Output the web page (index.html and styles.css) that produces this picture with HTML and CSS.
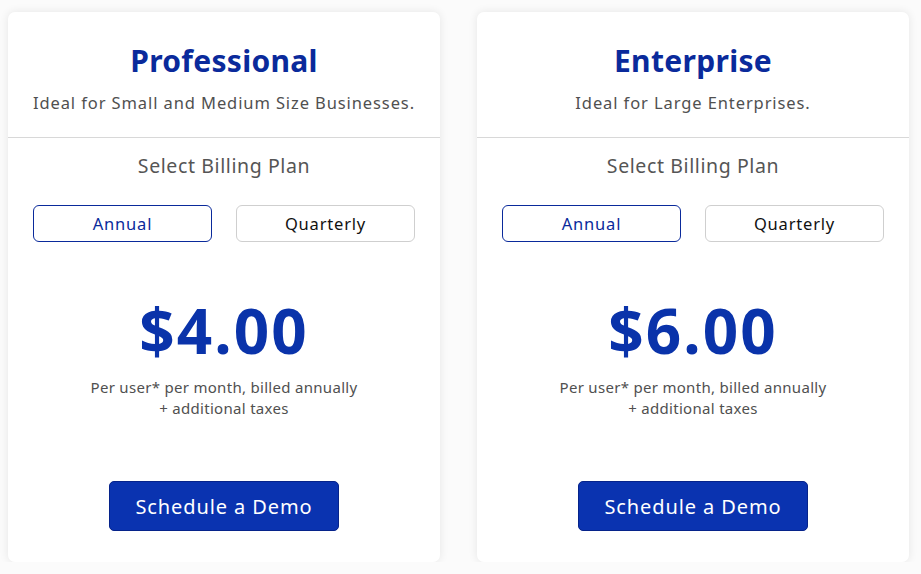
FILE: index.html
```html
<!DOCTYPE html>
<html>
<head>
<meta charset="utf-8">
<link rel="stylesheet" href="styles.css">
</head>
<body>
<div class="plans">
  <div class="card">
    <div class="card-head">
      <h2 class="title">Professional</h2>
      <p class="subtitle">Ideal for Small and Medium Size Businesses.</p>
    </div>
    <div class="card-body">
      <div class="billing-label">Select Billing Plan</div>
      <div class="toggle">
        <button class="opt active">Annual</button>
        <button class="opt">Quarterly</button>
      </div>
      <div class="price">$4.00</div>
      <p class="note">Per user* per month, billed annually<br>+ additional taxes</p>
      <button class="cta">Schedule a Demo</button>
    </div>
  </div>
  <div class="card">
    <div class="card-head">
      <h2 class="title">Enterprise</h2>
      <p class="subtitle">Ideal for Large Enterprises.</p>
    </div>
    <div class="card-body">
      <div class="billing-label">Select Billing Plan</div>
      <div class="toggle">
        <button class="opt active">Annual</button>
        <button class="opt">Quarterly</button>
      </div>
      <div class="price">$6.00</div>
      <p class="note">Per user* per month, billed annually<br>+ additional taxes</p>
      <button class="cta">Schedule a Demo</button>
    </div>
  </div>
</div>
</body>
</html>
```

FILE: styles.css
```css
* { box-sizing: border-box; }
html, body { margin: 0; padding: 0; }
body {
  background: #fbfbfb;
  font-family: "Noto Sans", "Open Sans", sans-serif;
  color: #555;
}
.plans {
  display: flex;
  gap: 37px;
  padding: 12px 0 0 8px;
}
.card {
  width: 432px;
  height: 550px;
  background: #fff;
  border-radius: 7px;
  box-shadow: 0 0 10px rgba(0,0,0,0.09);
  display: flex;
  flex-direction: column;
}
.card-head {
  height: 126px;
  border-bottom: 1px solid #d8d8d8;
  text-align: center;
  padding-top: 30px;
}
.title {
  margin: 0;
  font-size: 30px;
  line-height: 38px;
  font-weight: 700;
  color: #0a2a9b;
  letter-spacing: 0.3px;
}
.subtitle {
  margin: 11px 0 0;
  font-size: 16.5px;
  line-height: 24px;
  color: #505050;
  letter-spacing: 0.9px;
}
.card-body {
  display: flex;
  flex-direction: column;
  align-items: center;
  padding-top: 14px;
}
.billing-label {
  font-size: 19.5px;
  line-height: 28px;
  color: #555;
  letter-spacing: 0.6px;
}
.toggle {
  display: flex;
  gap: 24px;
  margin-top: 25px;
}
.opt {
  width: 179px;
  height: 37px;
  border: 1px solid #cfcfcf;
  border-radius: 6px;
  background: #fff;
  font-family: inherit;
  font-size: 16.5px;
  color: #111;
  padding: 0;
  letter-spacing: 0.8px;
}
.opt.active {
  border-color: #0a2a9b;
  color: #0a2a9b;
}
.price {
  margin-top: 52px;
  font-size: 62px;
  line-height: 72px;
  font-weight: 700;
  color: #0a33aa;
  letter-spacing: 2px;
}
.note {
  margin: 11px 0 0;
  text-align: center;
  font-size: 15px;
  line-height: 21px;
  color: #505050;
  letter-spacing: 0.3px;
}
.cta {
  margin-top: 62px;
  width: 230px;
  height: 50px;
  background: #0a33b0;
  border: 1px solid #06238a;
  border-radius: 5px;
  color: #fff;
  font-family: inherit;
  font-size: 20px;
  padding: 0;
  letter-spacing: 0.9px;
}
```
